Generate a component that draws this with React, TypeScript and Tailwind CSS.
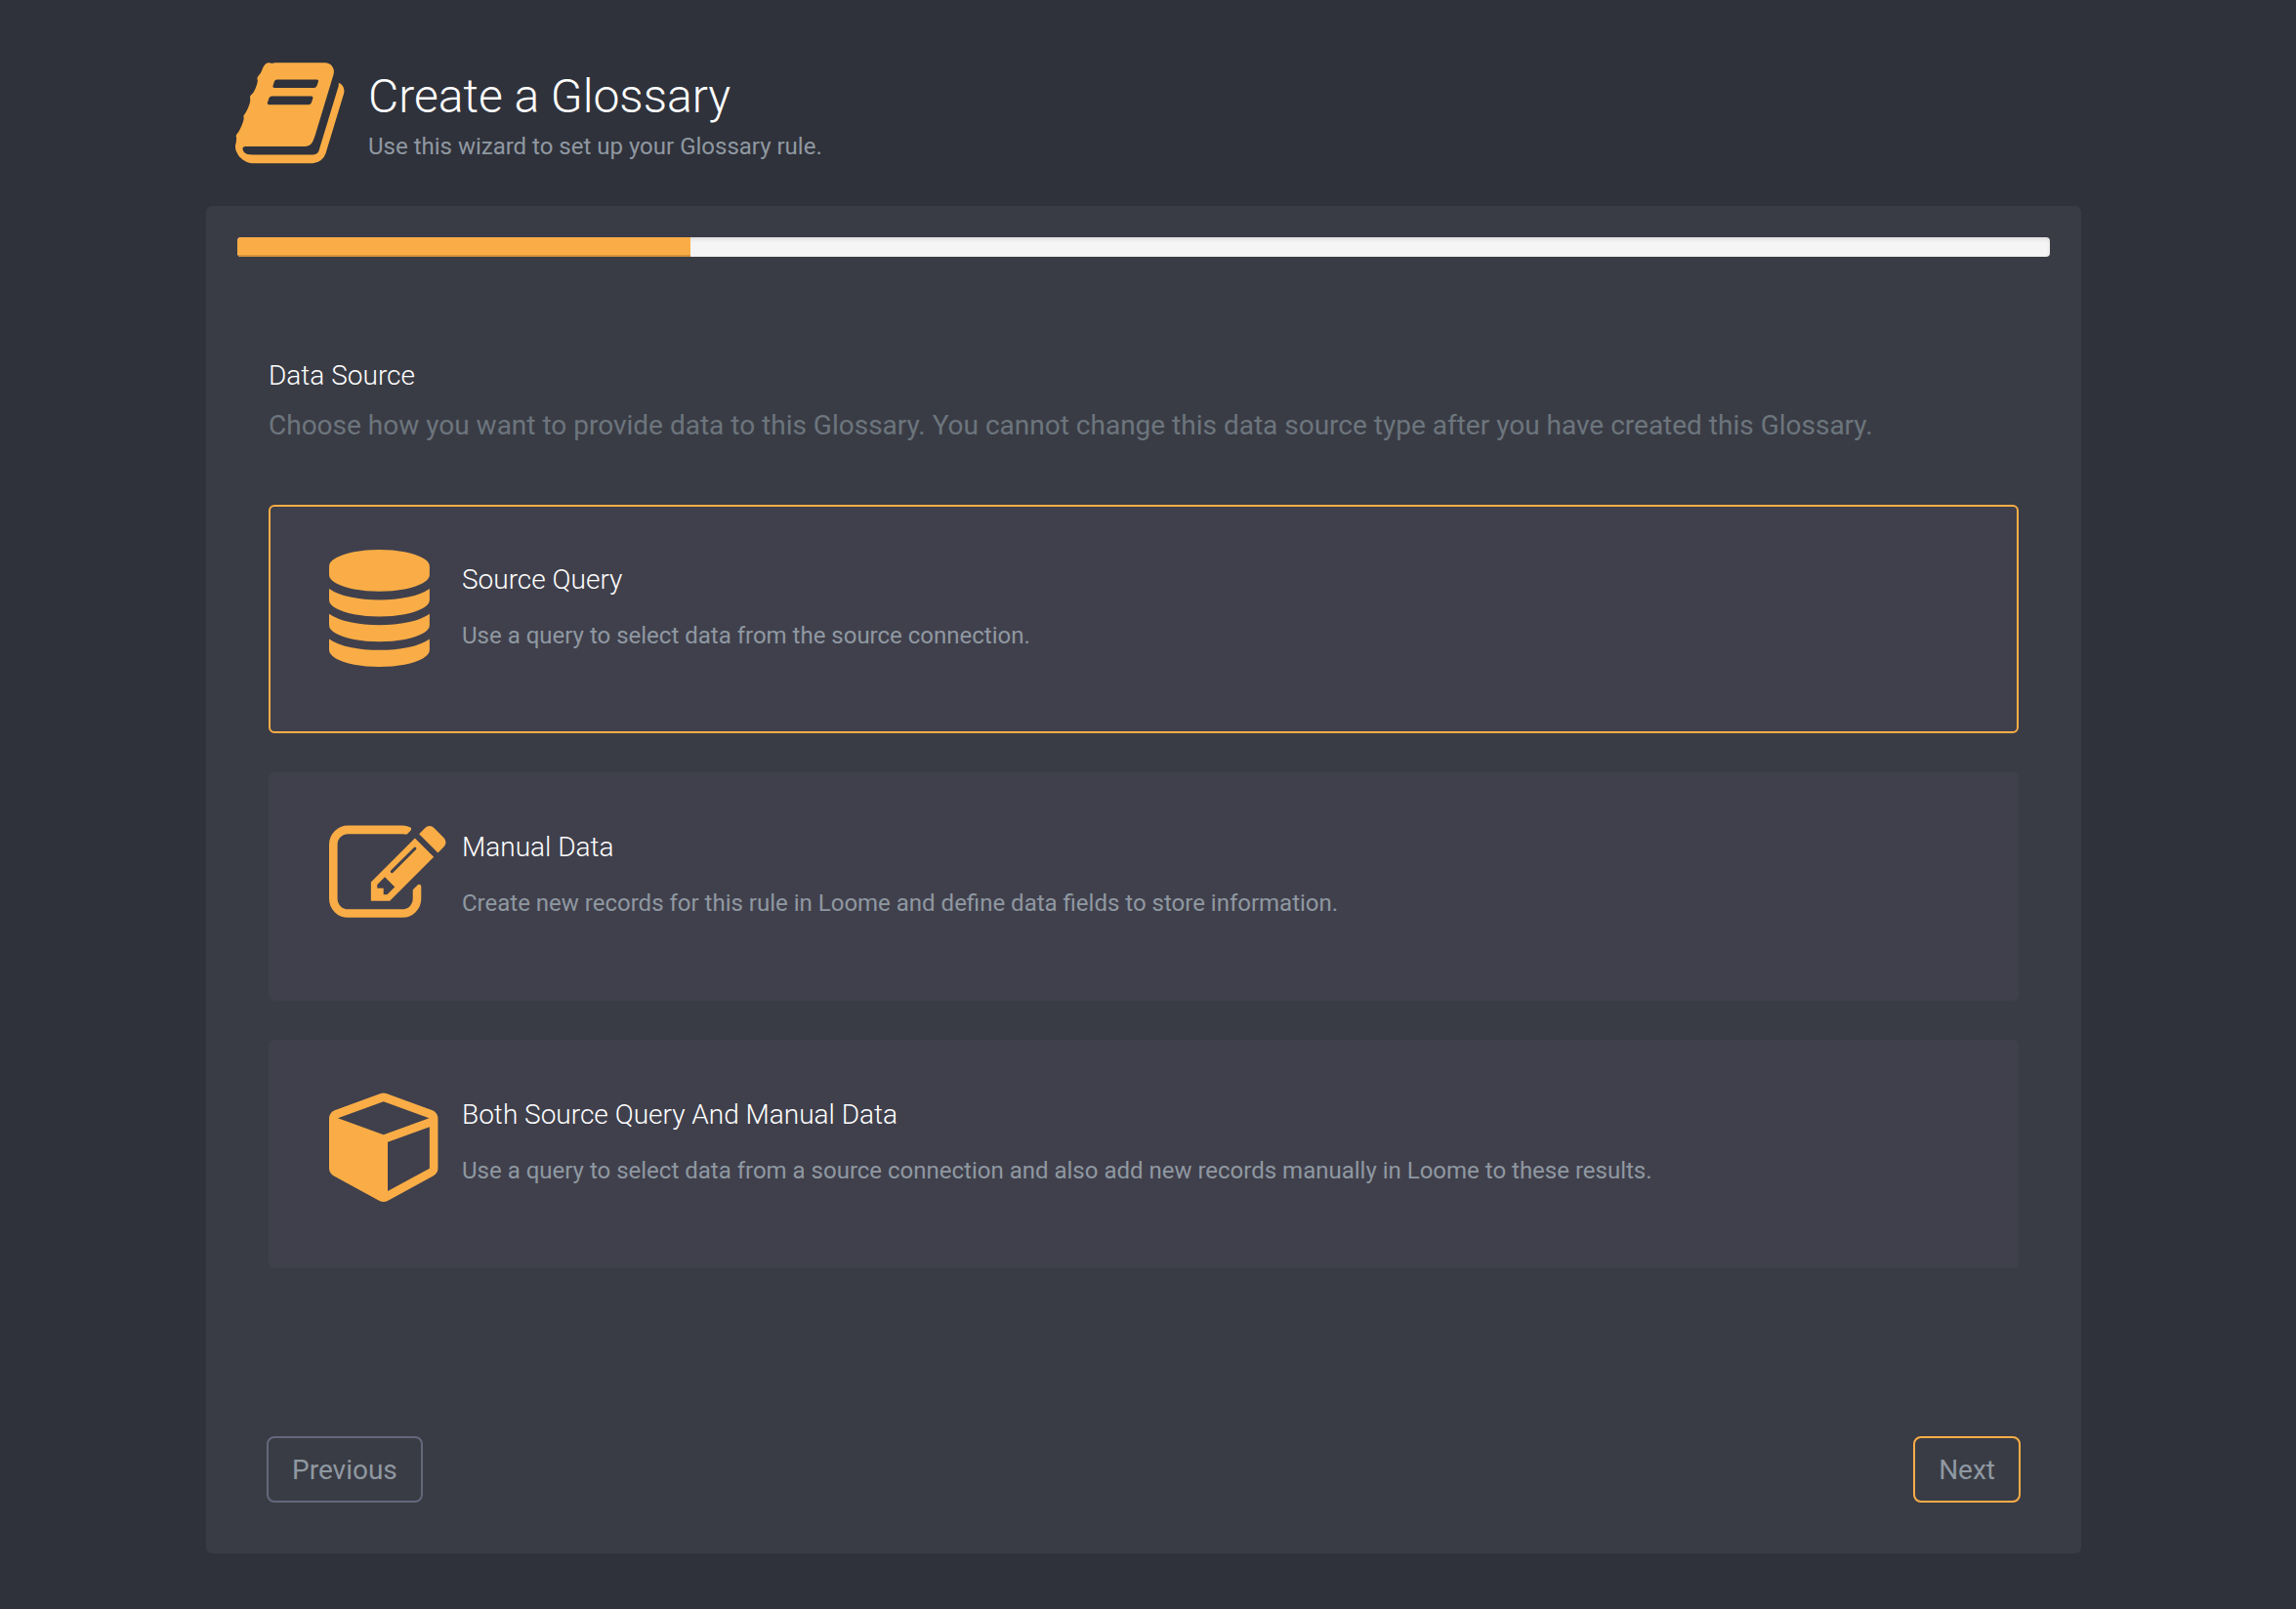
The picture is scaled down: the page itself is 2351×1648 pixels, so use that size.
import { useState } from "react";

type GlyphProps = { viewBox: string; d: string; className: string };

function Glyph({ viewBox, d, className }: GlyphProps) {
  return (
    <svg viewBox={viewBox} className={className} fill="currentColor" aria-hidden="true">
      <path d={d} />
    </svg>
  );
}

const bookPath =
  "M1703 478q40 57 18 129l-275 906q-19 64-76.5 107.5t-122.5 43.5h-923q-77 0-148.5-53.5t-99.5-131.5q-24-67-2-127 0-4 3-27t4-37q1-8-3-21.5t-3-19.5q2-11 8-21t16.5-23.5 16.5-23.5q23-38 45-91.5t30-91.5q3-10 .5-30t-.5-28q3-11 17-28t17-23q21-36 42-92t25-90q1-9-2.5-32t.5-28q4-13 22-30.5t22-22.5q19-26 42.5-84.5t27.5-96.5q1-8-3-25.5t-2-26.5q2-8 9-18t18-23 17-21q8-12 16.5-30.5t15-35 16-36 19.5-32 26.5-23.5 36-11.5 47.5 5.5l-1 3q38-9 51-9h761q74 0 114 56t18 130l-274 906q-36 119-71.5 153.5t-128.5 34.5h-869q-27 0-38 15-11 16-1 43 24 70 144 70h923q29 0 56-15.5t35-41.5l300-987q7-22 5-57 38 15 59 43zm-1064 2q-4 13 2 22.5t20 9.5h608q13 0 25.5-9.5t16.5-22.5l21-64q4-13-2-22.5t-20-9.5h-608q-13 0-25.5 9.5t-16.5 22.5zm-83 256q-4 13 2 22.5t20 9.5h608q13 0 25.5-9.5t16.5-22.5l21-64q4-13-2-22.5t-20-9.5h-608q-13 0-25.5 9.5t-16.5 22.5z";

const databasePath =
  "M896 768q237 0 443-43t325-127v170q0 69-103 128t-280 93.5-385 34.5-385-34.5-280-93.5-103-128v-170q119 84 325 127t443 43zm0 768q237 0 443-43t325-127v170q0 69-103 128t-280 93.5-385 34.5-385-34.5-280-93.5-103-128v-170q119 84 325 127t443 43zm0-384q237 0 443-43t325-127v170q0 69-103 128t-280 93.5-385 34.5-385-34.5-280-93.5-103-128v-170q119 84 325 127t443 43zm0-1152q208 0 385 34.5t280 93.5 103 128v128q0 69-103 128t-280 93.5-385 34.5-385-34.5-280-93.5-103-128v-128q0-69 103-128t280-93.5 385-34.5z";

const editPath =
  "M888 1184l116-116-152-152-116 116v56h96v96h56zm440-720q-16-16-33 1l-350 350q-17 17-1 33t33-1l350-350q17-17 1-33zm80 594v190q0 119-84.5 203.5t-203.5 84.5h-832q-119 0-203.5-84.5t-84.5-203.5v-832q0-119 84.5-203.5t203.5-84.5h832q63 0 117 25 15 7 18 23 3 17-9 29l-49 49q-14 14-32 8-23-6-45-6h-832q-66 0-113 47t-47 113v832q0 66 47 113t113 47h832q66 0 113-47t47-113v-126q0-13 9-22l64-64q15-15 35-7t20 29zm-96-738l288 288-672 672h-288v-288zm444 132l-92 92-288-288 92-92q28-28 68-28t68 28l152 152q28 28 28 68t-28 68z";

const cubePath =
  "M896 1629l640-349v-636l-640 233v752zm-64-865l698-254-698-254-698 254zm832-252v768q0 35-18 65t-49 47l-704 384q-28 16-61 16t-61-16l-704-384q-31-17-49-47t-18-65v-768q0-40 23-73t61-47l704-256q22-8 44-8t44 8l704 256q38 14 61 47t23 73z";

const sources = [
  {
    id: "query",
    title: "Source Query",
    text: "Use a query to select data from the source connection.",
    viewBox: "128 0 1792 1792",
    d: databasePath,
  },
  {
    id: "manual",
    title: "Manual Data",
    text: "Create new records for this rule in Loome and define data fields to store information.",
    viewBox: "0 0 1792 1792",
    d: editPath,
  },
  {
    id: "both",
    title: "Both Source Query And Manual Data",
    text: "Use a query to select data from a source connection and also add new records manually in Loome to these results.",
    viewBox: "0 0 1792 1792",
    d: cubePath,
  },
];

export default function App() {
  const [selected, setSelected] = useState("query");

  return (
    <div className="min-h-screen bg-[#2f323b] pt-[60px] pr-[220px] pb-14 pl-[211px] font-['Roboto',sans-serif]">
      <header className="flex h-[151px] items-start pl-[30px]">
        <Glyph viewBox="64 64 1792 1792" d={bookPath} className="size-[120px] shrink-0 text-[#faad46]" />
        <div className="ml-4 pt-1.5">
          <h1 className="text-[48px] leading-[66px] font-light text-white">Create a Glossary</h1>
          <p className="text-[24px] leading-9 text-[#8f98a1]">Use this wizard to set up your Glossary rule.</p>
        </div>
      </header>

      <main className="rounded-md bg-[#3a3c45] p-8">
        <div
          role="progressbar"
          aria-label="Wizard progress"
          aria-valuenow={25}
          aria-valuemin={0}
          aria-valuemax={100}
          className="h-5 overflow-hidden rounded bg-[#f5f5f5] shadow-[inset_0_2px_4px_rgba(0,0,0,0.1)]"
        >
          <div className="h-full w-1/4 bg-[#faad46] shadow-[inset_0_-2px_0_rgba(0,0,0,0.15)]" />
        </div>

        <form className="px-8 pt-[100px]" onSubmit={(e) => e.preventDefault()}>
          <h2 className="text-[28px] leading-11 font-light text-white">Data Source</h2>
          <p className="mt-[7px] text-[28px] leading-11 text-[#6c757d]">
            Choose how you want to provide data to this Glossary. You cannot change this data source type after you have
            created this Glossary.
          </p>

          <div role="radiogroup" aria-label="Data Source" className="mt-[59px] flex flex-col gap-10">
            {sources.map((s) => (
              <label
                key={s.id}
                className="flex min-h-[234px] cursor-pointer items-start rounded-md border-2 border-transparent bg-[#40404c] px-15 pt-11 has-checked:border-[#faad46]"
              >
                <input
                  type="radio"
                  name="source"
                  value={s.id}
                  checked={selected === s.id}
                  onChange={() => setSelected(s.id)}
                  className="sr-only"
                />
                <Glyph viewBox={s.viewBox} d={s.d} className="size-[120px] shrink-0 text-[#faad46]" />
                <span className="ml-4 block pt-[9px]">
                  <span className="block text-[28px] leading-11 font-light text-white">{s.title}</span>
                  <span className="mt-[17px] block text-[24px] leading-9 text-[#8f98a1]">{s.text}</span>
                </span>
              </label>
            ))}
          </div>

          <div className="-mx-0.5 mt-[172px] mb-5 flex justify-between">
            <button
              type="button"
              className="h-[68px] rounded-lg border-2 border-[#64677b] px-6 pt-0.5 text-[28px] leading-10 text-[#8f98a1]"
            >
              Previous
            </button>
            <button
              type="submit"
              className="h-[68px] rounded-lg border-2 border-[#faad46] px-6 pt-0.5 text-[28px] leading-10 text-[#8f98a1]"
            >
              Next
            </button>
          </div>
        </form>
      </main>
    </div>
  );
}
